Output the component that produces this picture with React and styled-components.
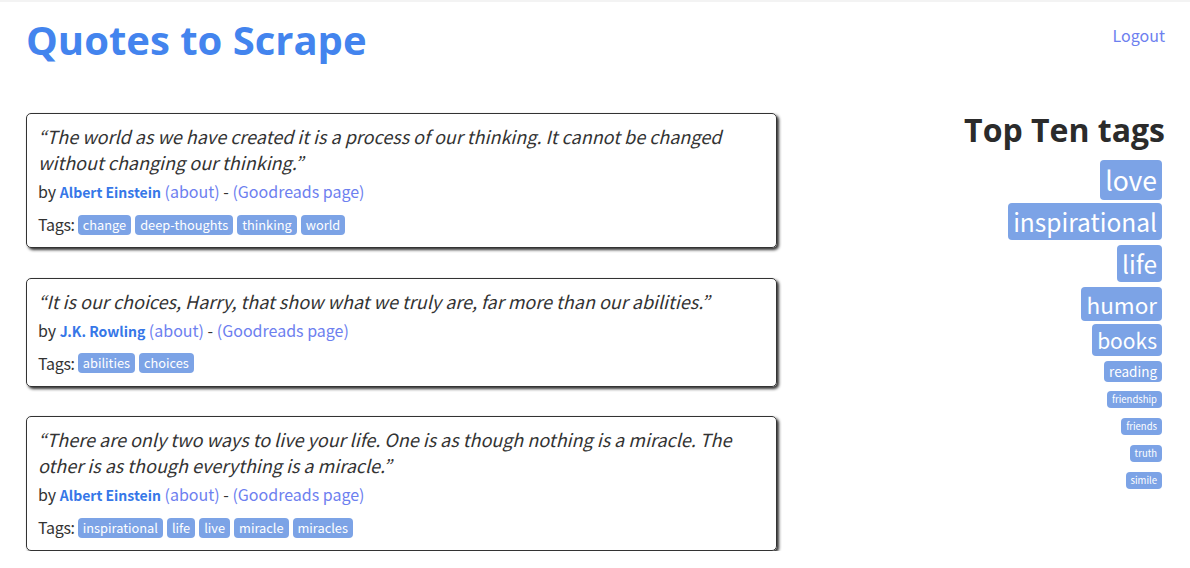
import React from "react";
import styled, { createGlobalStyle } from "styled-components";

const Global = createGlobalStyle`
  html, body { margin: 0; padding: 0; background: #fff; }
  body {
    font-family: "Noto Sans CJK KR", "Noto Sans", sans-serif;
    color: #333;
    border-top: 2px solid #f3f3f3;
  }
  a { text-decoration: none; }
`;

const Container = styled.div`
  width: 1140px;
  margin: 0 auto;
`;

const Header = styled.header`
  display: flex;
  justify-content: space-between;
  align-items: flex-start;
  height: 111px;
`;

const Title = styled.h1`
  margin: 12px 0 0 1px;
  font-family: "Open Sans", sans-serif;
  font-weight: 700;
  font-size: 40px;
  line-height: 52px;
  color: #4384ee;
`;

const Logout = styled.a`
  margin-top: 22px;
  font-size: 16px;
  line-height: 22px;
  color: #6d80ef;
`;

const Main = styled.div`
  display: grid;
  grid-template-columns: 752px 1fr;
  column-gap: 28px;
`;

const Quotes = styled.div`
  display: flex;
  flex-direction: column;
  gap: 29.5px;
`;

const Card = styled.div`
  border: 1px solid #333;
  border-radius: 5px;
  box-shadow: 2px 2px 3px #333;
  padding: 9px 11px 11px;
  margin-left: 1px;
`;

const QuoteText = styled.span`
  display: block;
  margin-bottom: 5px;
  font-size: 18px;
  line-height: 26px;
  font-style: italic;
  color: #333;
`;

const ByLine = styled.div`
  font-size: 16px;
  line-height: 23px;
`;

const Author = styled.small`
  font-size: 14px;
  font-weight: 700;
  color: #3677e8;
`;

const Link = styled.a`
  color: #6d80ef;
`;

const TagsRow = styled.div`
  margin-top: 9px;
  display: flex;
  align-items: center;
  gap: 4px;
  font-size: 16px;
  line-height: 23px;
`;

const TagsLabel = styled.span`
  margin-right: -1px;
  letter-spacing: -0.3px;
`;

const Tag = styled.a`
  display: inline-block;
  background: #7ca3e6;
  color: #fff;
  font-size: 12.8px;
  line-height: 20px;
  height: 20px;
  padding: 0 5px;
  border-radius: 4px;
`;

const Side = styled.div`
  display: flex;
  flex-direction: column;
  align-items: flex-end;
`;

const SideTitle = styled.h2`
  margin: -1px 0 12px;
  font-family: "Open Sans", sans-serif;
  font-weight: 700;
  font-size: 32px;
  line-height: 36px;
  color: #2b2b2b;
`;

const TagItem = styled.a`
  display: block;
  background: #7ca3e6;
  color: #fff;
  border-radius: 4px;
  margin: 0 3px ${(p) => p.$gap}px 0;
  padding: 0 ${(p) => p.$pad}px;
  font-size: ${(p) => p.$size}px;
  height: ${(p) => p.$h}px;
  line-height: ${(p) => p.$h}px;
`;

const quotes = [
  {
    text:
      "“The world as we have created it is a process of our thinking. It cannot be changed without changing our thinking.”",
    author: "Albert Einstein",
    tags: ["change", "deep-thoughts", "thinking", "world"],
  },
  {
    text:
      "“It is our choices, Harry, that show what we truly are, far more than our abilities.”",
    author: "J.K. Rowling",
    tags: ["abilities", "choices"],
  },
  {
    text:
      "“There are only two ways to live your life. One is as though nothing is a miracle. The other is as though everything is a miracle.”",
    author: "Albert Einstein",
    tags: ["inspirational", "life", "live", "miracle", "miracles"],
  },
];

const topTags = [
  { name: "love", size: 26.5, h: 40, gap: 3, pad: 5 },
  { name: "inspirational", size: 24.5, h: 37, gap: 5, pad: 5 },
  { name: "life", size: 24.5, h: 37, gap: 5, pad: 5 },
  { name: "humor", size: 22.5, h: 34, gap: 3, pad: 5 },
  { name: "books", size: 21, h: 32, gap: 5, pad: 5 },
  { name: "reading", size: 13.5, h: 21, gap: 9, pad: 5 },
  { name: "friendship", size: 9.5, h: 17, gap: 10, pad: 5 },
  { name: "friends", size: 9.5, h: 17, gap: 10, pad: 5 },
  { name: "truth", size: 9.5, h: 17, gap: 10, pad: 5 },
  { name: "simile", size: 9.5, h: 17, gap: 0, pad: 5 },
];

export default function App() {
  return (
    <>
      <Global />
      <Container>
        <Header>
          <Title>Quotes to Scrape</Title>
          <Logout href="#">Logout</Logout>
        </Header>
        <Main>
          <Quotes>
            {quotes.map((q, i) => (
              <Card key={i}>
                <QuoteText>{q.text}</QuoteText>
                <ByLine>
                  by <Author>{q.author}</Author> <Link href="#">(about)</Link>{" "}
                  - <Link href="#">(Goodreads page)</Link>
                </ByLine>
                <TagsRow>
                  <TagsLabel>Tags:</TagsLabel>
                  {q.tags.map((t) => (
                    <Tag key={t} href="#">
                      {t}
                    </Tag>
                  ))}
                </TagsRow>
              </Card>
            ))}
          </Quotes>
          <Side>
            <SideTitle>Top Ten tags</SideTitle>
            {topTags.map((t) => (
              <TagItem
                key={t.name}
                href="#"
                $size={t.size}
                $h={t.h}
                $gap={t.gap}
                $pad={t.pad}
              >
                {t.name}
              </TagItem>
            ))}
          </Side>
        </Main>
      </Container>
    </>
  );
}
